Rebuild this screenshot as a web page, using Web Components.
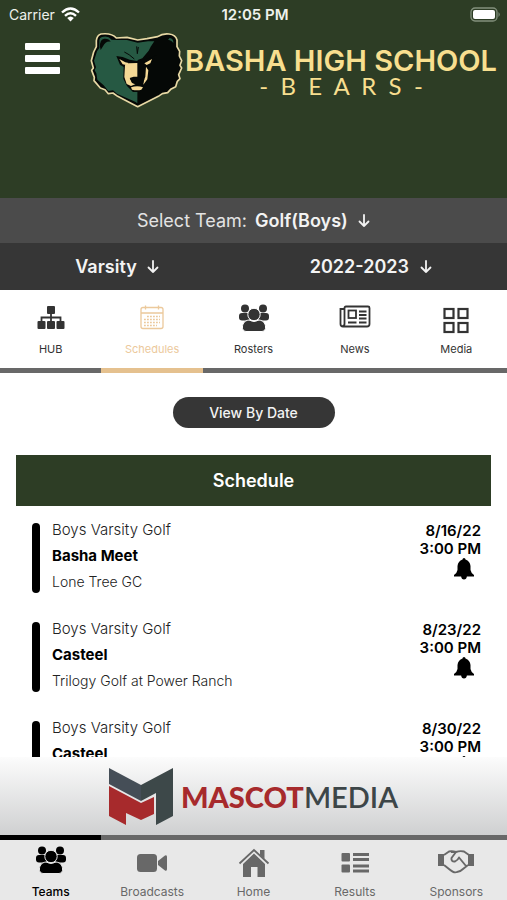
<!DOCTYPE html>
<html lang="en">
<head>
<meta charset="utf-8">
<meta name="viewport" content="width=device-width, initial-scale=1">
<title>Basha High School Bears</title>
<style>
    body {
        margin: 0;
        background: #fff;
        font-family: Inter, "Liberation Sans", sans-serif;
    }
</style>
</head>
<body>
<team-app>
    <status-bar slot="header"></status-bar>
    <school-header slot="header"></school-header>
    <div slot="header">
        <filter-row>
            <drop-picker label="Select Team:" value="Golf(Boys)"></drop-picker>
        </filter-row>
        <filter-row class="dark">
            <drop-picker name="Level" value="Varsity"></drop-picker>
            <drop-picker name="Season" value="2022-2023"></drop-picker>
        </filter-row>
    </div>
    <tab-strip slot="tabs" name="Team">
        <icon-tab icon="hub">HUB</icon-tab>
        <icon-tab icon="calendar" active>Schedules</icon-tab>
        <icon-tab icon="people">Rosters</icon-tab>
        <icon-tab icon="news">News</icon-tab>
        <icon-tab icon="grid">Media</icon-tab>
    </tab-strip>
    <schedule-list>
        <game-row sport="Boys Varsity Golf" opponent="Basha Meet" place="Lone Tree GC" date="8/16/22" time="3:00 PM"></game-row>
        <game-row sport="Boys Varsity Golf" opponent="Casteel" place="Trilogy Golf at Power Ranch" date="8/23/22" time="3:00 PM"></game-row>
        <game-row sport="Boys Varsity Golf" opponent="Casteel" place="" date="8/30/22" time="3:00 PM"></game-row>
    </schedule-list>
    <sponsor-banner slot="footer"></sponsor-banner>
    <tab-strip slot="footer" class="bottom" name="Main">
        <icon-tab class="bottom" icon="people" active>Teams</icon-tab>
        <icon-tab class="bottom" icon="video">Broadcasts</icon-tab>
        <icon-tab class="bottom" icon="home">Home</icon-tab>
        <icon-tab class="bottom" icon="results">Results</icon-tab>
        <icon-tab class="bottom" icon="hands">Sponsors</icon-tab>
    </tab-strip>
</team-app>

<script>
// all icons are drawn on a 36x32 canvas
const icons = {
    hub: `<g fill="currentColor"><rect x="14" y="2" width="8" height="8" rx="1"/><rect x="4.500" y="17" width="8" height="8" rx="1"/><rect x="14" y="17" width="8" height="8" rx="1"/><rect x="23.500" y="17" width="8" height="8" rx="1"/></g>
        <path d="M18 9v9M8.500 18v-4.500h19V18" fill="none" stroke="currentColor" stroke-width="1.800"/>`,
    calendar: `<g fill="none" stroke="currentColor" stroke-width="1.300"><rect x="7" y="3.500" width="22" height="21" rx="2"/><path d="M7 9h22M11.500 1.500v4M24.500 1.500v4"/><path d="M13 12.500h13M10 15.500h16M10 18.500h16M10 21.500h13" stroke-dasharray="1.800 1.200"/></g>`,
    people: `<g fill="currentColor"><circle cx="9" cy="4.500" r="4"/><circle cx="27" cy="4.500" r="4"/><rect x="3" y="9" width="11" height="7.500" rx="3"/><rect x="22" y="9" width="11" height="7.500" rx="3"/>
        <g stroke="var(--tab-bg, #fff)" stroke-width="1"><circle cx="18" cy="10.500" r="6.200"/><path d="M13 16Q18 19 23 16C28 16.500 30 20.500 29.500 24.500Q29 27.500 26 27.500H10Q7 27.500 6.500 24.500C6 20.500 8 16.500 13 16Z"/></g></g>`,
    news: `<g fill="none" stroke="currentColor" stroke-width="1.800"><path d="M7.500 4Q7.500 2.500 9 2.500H31Q32.500 2.500 32.500 4V20Q32.500 22.500 30 22.500H6Q3.500 22.500 3.500 20V5H7.500V20Q7.500 22 5.500 22"/><rect x="11.500" y="6.500" width="7.500" height="7.500"/><path d="M22 7.500h7.500M22 11h7.500M22 14.500h7.500M11 18.500h8.500M22 18.500h7.500"/></g>`,
    grid: `<g fill="none" stroke="currentColor" stroke-width="2.200"><rect x="6.500" y="5" width="9" height="9"/><rect x="20.500" y="5" width="9" height="9"/><rect x="6.500" y="19" width="9" height="9"/><rect x="20.500" y="19" width="9" height="9"/></g>`,
    video: `<g fill="currentColor"><rect x="3" y="8" width="20" height="18" rx="3.500"/><path d="M24 15L31 9.500Q33 8.500 33 11V23Q33 25.500 31 24.500L24 19Z"/></g>`,
    home: `<g fill="currentColor"><path d="M18 7.500L29 18V31H21.500V21H15V31H7V18Z"/><path d="M24 4h4.500v9L24 9Z"/></g><path d="M3.500 17.500L18 4L32.500 17.500" fill="none" stroke="currentColor" stroke-width="1.800"/>`,
    results: `<g fill="currentColor"><rect x="4.500" y="7" width="8.500" height="8.500" rx="1"/><rect x="4.500" y="18.500" width="8.500" height="8" rx="1"/><rect x="16" y="7" width="16" height="3"/><rect x="16" y="12" width="16" height="3"/><rect x="16" y="18.500" width="16" height="3"/><rect x="16" y="23.500" width="16" height="3"/></g>`,
    hands: `<path d="M0 8H6V20H0ZM30 8H36V20H30Z" fill="currentColor"/><path d="M6 9L11 5.500Q14 4.500 18 6Q22 4.500 26 5.500L31 9M6 19L11 23Q16 27.500 19 26Q22 26 25 23L30 19M18 6L13.500 12Q13 16 17 15.500Q20 14 21 11.500L28 20M13 6L18 6" fill="none" stroke="currentColor" stroke-width="1.900" stroke-linejoin="round"/>`
};

class BaseElement extends HTMLElement {
    connectedCallback() {
        this.attachShadow({ mode: 'open' });
        this.shadowRoot.innerHTML = this.render();
    }
}

class TeamApp extends BaseElement {
    render() {
        return `
            <style>
                :host { display: flex; flex-direction: column; height: 100vh; overflow: hidden; }
                header, footer { flex: none; }
                header { background: #2d3d25; }
                main { flex: 1; min-height: 0; overflow-y: auto; scrollbar-width: none; }
            </style>
            <header><slot name="header"></slot></header>
            <slot name="tabs"></slot>
            <main><slot></slot></main>
            <footer><slot name="footer"></slot></footer>
        `;
    }
}
customElements.define('team-app', TeamApp);

class StatusBar extends BaseElement {
    render() {
        return `
            <style>
                :host {
                    display: grid;
                    grid-template-columns: 1fr auto 1fr;
                    align-items: center;
                    height: 28px;
                    padding: 0 6px 0 9px;
                    color: #eef1ec;
                    font-size: 14px;
                }
                div { display: flex; align-items: center; gap: 6px; }
                b { font-size: 15px; font-weight: 600; }
                .battery { justify-self: end; }
            </style>
            <div>Carrier
                <svg width="19" height="15" viewBox="0 0 19 15" fill="none" stroke="#fff" stroke-width="2.400" aria-hidden="true">
                    <path d="M1 5.500Q9.500-2.500 18 5.500M4 8.800Q9.500 3.500 15 8.800"/>
                    <path d="M6.200 11Q9.500 8 12.800 11L9.500 14.500Z" fill="#fff" stroke="none"/>
                </svg>
            </div>
            <b>12:05 PM</b>
            <div class="battery">
                <svg width="31" height="15" viewBox="0 0 31 15" aria-hidden="true">
                    <rect x="1" y="1" width="26" height="13" rx="4" fill="none" stroke="#82907c" stroke-width="1.300"/>
                    <rect x="3" y="3" width="22" height="9" rx="2" fill="#fff"/>
                    <path d="M28.500 5Q31 7.500 28.500 10Z" fill="#82907c"/>
                </svg>
            </div>
        `;
    }
}
customElements.define('status-bar', StatusBar);

class SchoolHeader extends BaseElement {
    render() {
        return `
            <style>
                :host {
                    display: flex;
                    align-items: flex-start;
                    justify-content: space-between;
                    padding: 4px 10px 90px 25px;
                    color: #f8df8f;
                }
                button {
                    display: grid;
                    gap: 5px;
                    width: 35px;
                    margin-top: 11px;
                    padding: 0;
                    border: 0;
                    background: none;
                }
                button i { height: 7px; border-radius: 1px; background: #fff; }
                .brand { display: flex; align-items: flex-start; gap: 2px; }
                .name { display: grid; justify-items: center; padding-top: 14px; white-space: pre; }
                h1 { margin: 0; font-size: 29px; line-height: 30px; font-weight: 600; }
                p { margin: 0; font: 400 24px/20px Lato, sans-serif; }
            </style>
            <button aria-label="Menu"><i></i><i></i><i></i></button>
            <div class="brand">
                <svg width="93" height="76" viewBox="29 22 279 228" aria-hidden="true">
                    <path d="M62 28Q50 32 48 48V66L40 82L33 108L39 130L34 137L42 158L41 168L60 190L74 195L84 207L98 205L112 215L172 246L234 215L246 207L262 204L271 194L286 186L291 170L299 162L295 150L304 130L299 122L304 108L297 94L298 80L290 66V46Q286 30 266 28Q246 26 232 36L200 42L172 46L140 38L108 40Q94 24 62 28Z" fill="#050806" stroke="#e8d9a5" stroke-width="5" stroke-linejoin="round"/>
                    <path d="M65 37Q82 31 94 45L112 46L140 46L172 54L203 50L222 50L211 66L205 78L186 101L172 106L171 236L166 232L110 207L98 197L84 199L70 182L51 165L48 146L43 137L47 128L41 108L50 80L57 70V46Q58 39 65 37Z" fill="#265943"/>
                    <path d="M59 66Q58 44 72 42Q86 41 91 51Q76 48 68 65L61 76Z" fill="#050806"/>
                    <path d="M74 65Q80 55 89 57Q78 60 76 68Z" fill="#265943"/>
                    <path d="M268 40Q280 41 279 56Q275 47 263 45Z" fill="#265943"/>
                    <path d="M108 94L127 97L148 105L170 109L190 105L216 97L229 91L214 116L205 122L208 160L198 184L188 202H158L140 184L129 162L130 127L119 120Z" fill="#050806"/>
                    <path d="M117 103L135 113L145 115L140 122L127 119ZM215 103L199 112L192 116L199 121L210 116Z" fill="#f4d895"/>
                    <path d="M134 122L145 116L171 115V157L149 162L155 175L166 178L152 184L139 178L132 157Z" fill="#f4d895"/>
                    <path d="M197 126L204 137L201 164L189 180L190 169L195 156Z" fill="#f4d895"/>
                    <path d="M148 160L160 156H184L192 164L188 177L178 174L171 182L156 174Z" fill="#050806"/>
                    <path d="M152 188Q171 182 188 188L183 195Q171 199 155 195Z" fill="#f4d895"/>
                    <path d="M169 65L171 87L174 67" fill="none" stroke="#050806" stroke-width="3"/>
                    <path d="M132 82Q146 88 162 103" fill="none" stroke="#050806" stroke-width="3"/>
                </svg>
                <div class="name"><h1>BASHA HIGH SCHOOL</h1><p>-  B  E  A  R  S  -</p></div>
            </div>
        `;
    }
}
customElements.define('school-header', SchoolHeader);

class FilterRow extends BaseElement {
    render() {
        return `
            <style>
                :host {
                    display: flex;
                    align-items: center;
                    justify-content: space-around;
                    height: 45px;
                    background: #4b4b4b;
                    color: #f3f3f3;
                }
                :host(.dark) { height: 47px; background: #363636; }
            </style>
            <slot></slot>
        `;
    }
}
customElements.define('filter-row', FilterRow);

class DropPicker extends BaseElement {
    render() {
        const label = this.getAttribute('label');
        const value = this.getAttribute('value');
        return `
            <style>
                :host { display: flex; align-items: center; justify-content: center; font-size: 18px; }
                label { margin-right: 8px; color: #e3e3e3; }
                select {
                    appearance: none;
                    padding: 0;
                    border: 0;
                    background: none;
                    color: inherit;
                    font: inherit;
                    font-weight: 600;
                }
                svg { margin-left: 10px; }
            </style>
            ${label ? `<label for="pick">${label}</label>` : ''}
            <select id="pick" ${label ? '' : `aria-label="${this.getAttribute('name')}"`}>
                <option>${value}</option>
            </select>
            <svg width="12" height="14" viewBox="0 0 12 14" fill="none" stroke="currentColor" stroke-width="1.800" stroke-linecap="round" stroke-linejoin="round" aria-hidden="true">
                <path d="M6 1V12M1.500 7.500L6 12L10.500 7.500"/>
            </svg>
        `;
    }
}
customElements.define('drop-picker', DropPicker);

class TabStrip extends BaseElement {
    render() {
        return `
            <style>
                :host { display: block; flex: none; }
                nav { display: flex; background: #fff; }
                :host(.bottom) nav { background: #e8e8e8; }
            </style>
            <nav aria-label="${this.getAttribute('name')}"><slot></slot></nav>
        `;
    }
}
customElements.define('tab-strip', TabStrip);

class IconTab extends BaseElement {
    render() {
        return `
            <style>
                :host {
                    --line: #686868;
                    display: block;
                    flex: 1;
                    min-width: 0;
                    color: #333;
                    font-size: 11px;
                }
                :host([active]) { --line: #e5c18f; color: #ecc99c; }
                a {
                    display: flex;
                    flex-direction: column;
                    align-items: center;
                    gap: 4px;
                    padding: 14px 0 10px;
                    border-bottom: 5px solid var(--line);
                    color: inherit;
                    line-height: 18px;
                    text-decoration: none;
                }
                :host(.bottom) { --tab-bg: #e8e8e8; color: #686868; font-size: 12px; }
                :host(.bottom[active]) { --line: #000; color: #000; font-weight: 500; }
                :host(.bottom) a {
                    gap: 6px;
                    padding: 6px 0 0;
                    border-top: 5px solid var(--line);
                    border-bottom: 0;
                    line-height: 16px;
                }
            </style>
            <a href="#">
                <svg width="36" height="32" viewBox="0 0 36 32" aria-hidden="true">${icons[this.getAttribute('icon')]}</svg>
                <span><slot></slot></span>
            </a>
        `;
    }
}
customElements.define('icon-tab', IconTab);

class ScheduleList extends BaseElement {
    render() {
        return `
            <style>
                :host { display: block; padding: 24px 16px; }
                button {
                    display: block;
                    width: 162px;
                    height: 31px;
                    margin: 0 auto 27px;
                    border: 0;
                    border-radius: 16px;
                    background: #363636;
                    color: #f3f3f3;
                    font: 500 14px Inter, sans-serif;
                }
                h2 {
                    margin: 0 0 17px;
                    background: #2d3d25;
                    color: #fff;
                    font-size: 18px;
                    line-height: 51px;
                    font-weight: 600;
                    text-align: center;
                }
                section { display: grid; gap: 29px; }
            </style>
            <button>View By Date</button>
            <h2>Schedule</h2>
            <section><slot></slot></section>
        `;
    }
}
customElements.define('schedule-list', ScheduleList);

class GameRow extends BaseElement {
    render() {
        const get = name => this.getAttribute(name);
        return `
            <style>
                :host {
                    display: flex;
                    gap: 12px;
                    height: 70px;
                    padding: 0 10px 0 16px;
                    color: #000;
                    font-size: 15px;
                }
                .bar { width: 8px; border-radius: 4px; background: #000; }
                .info { flex: 1; margin-top: -6px; line-height: 26px; }
                .info div { color: #222; font-weight: 300; }
                .info .place { font-size: 14px; }
                b { font-weight: 700; }
                .when { margin-top: -1px; line-height: 18px; font-weight: 600; text-align: right; }
                button { padding: 0 6px; border: 0; background: none; }
                button svg { display: block; }
            </style>
            <span class="bar"></span>
            <div class="info">
                <div>${get('sport')}</div>
                <b>${get('opponent')}</b>
                <div class="place">${get('place')}</div>
            </div>
            <div class="when">
                <div>${get('date')}</div>
                <div>${get('time')}</div>
                <button aria-label="Remind me">
                    <svg width="22" height="22" viewBox="0 0 22 22" aria-hidden="true">
                        <path d="M11 0Q12.500 0 12.500 1.500Q17 3 17.500 8V12Q18 15 21 17V18.500H1V17Q4 15 4.500 12V8Q5 3 9.500 1.500Q9.500 0 11 0ZM8 18H14Q13.500 21.500 11 21.500Q8.500 21.500 8 18Z"/>
                    </svg>
                </button>
            </div>
        `;
    }
}
customElements.define('game-row', GameRow);

class SponsorBanner extends BaseElement {
    render() {
        return `
            <style>
                :host {
                    display: flex;
                    align-items: center;
                    justify-content: center;
                    gap: 8px;
                    height: 78px;
                    background: linear-gradient(#fcfcfc, #cfd0d1);
                    color: #3d4648;
                    font: 600 29px Lato, sans-serif;
                }
                b { color: #a72a2c; font-weight: 900; }
            </style>
            <svg width="64" height="58" viewBox="0 0 64 58" aria-hidden="true">
                <path d="M0 1L32 18V34L0 17Z" fill="#454e57"/>
                <path d="M32 18L64 1V49L47 58V26L32 34Z" fill="#3d4849"/>
                <path d="M0 19L32 36L45 30V47L32 53L17 46V58L0 49Z" fill="#a72a2c"/>
            </svg>
            <span><b>MASCOT</b>MEDIA</span>
        `;
    }
}
customElements.define('sponsor-banner', SponsorBanner);
</script>
</body>
</html>
